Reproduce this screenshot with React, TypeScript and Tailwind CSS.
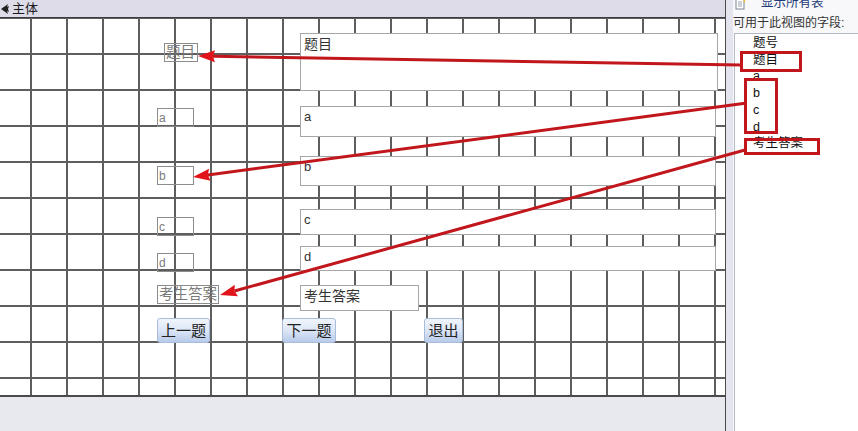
import React from 'react';

const FONT = { fontFamily: '"Liberation Sans", "Noto Sans CJK SC", sans-serif' };

type Pt = [number, number];

const Arrow: React.FC<{ from: Pt; to: Pt }> = ({ from, to }) => {
  const dx = from[0] - to[0];
  const dy = from[1] - to[1];
  const len = Math.hypot(dx, dy);
  const ux = dx / len;
  const uy = dy / len;
  const bx = to[0] + ux * 17;
  const by = to[1] + uy * 17;
  const pts = [
    `${to[0]},${to[1]}`,
    `${bx - uy * 6},${by + ux * 6}`,
    `${bx + ux * -2},${by + uy * -2}`,
    `${bx + uy * 6},${by - ux * 6}`,
  ].join(' ');
  return (
    <g>
      <line x1={from[0]} y1={from[1]} x2={bx - ux * 2} y2={by - uy * 2} stroke="#c2161d" strokeWidth={3} />
      <polygon points={pts} fill="#e0141a" />
    </g>
  );
};

const Label: React.FC<{ className: string; text: string; small?: boolean }> = ({ className, text, small }) => (
  <div
    className={`absolute border border-[#8c8c8c] text-[#7a7a7a] leading-none whitespace-nowrap overflow-hidden flex items-center pl-[1px] ${small ? 'text-[12px]' : 'text-[14.5px]'} ${className}`}
  >
    {text}
  </div>
);

const TextBox: React.FC<{ className: string; text: string }> = ({ className, text }) => (
  <div className={`absolute left-[300px] bg-white border border-[#a6a6a6] text-[14px] text-[#333] leading-none pl-[3px] pt-[3px] ${className}`}>
    {text}
  </div>
);

const Btn: React.FC<{ className: string; text: string }> = ({ className, text }) => (
  <div
    className={`absolute top-[300px] h-[25px] rounded-[3px] border border-[#a9bcdb] bg-gradient-to-b from-[#f1f5fc] via-[#dce6f6] to-[#b8cbea] text-[15px] text-[#222] flex items-center justify-center leading-none ${className}`}
  >
    {text}
  </div>
);

const fields = ['题号', '题目', 'a', 'b', 'c', 'd', '考生答案'];

export default function App() {
  return (
    <div className="relative w-[858px] h-[431px] overflow-hidden flex bg-white" style={FONT}>
      {/* form design area */}
      <div className="w-[726px] flex flex-col border-r border-[#4a4a4a]">
        <div className="h-[18px] shrink-0 bg-[#dddce8] border-b border-[#3c3c3c] flex items-center pl-[1px] gap-[3px] text-[13px] text-[#1a1a1a]">
          <svg width="8" height="10" viewBox="0 0 8 10">
            <polygon points="0,5 7,0 6,3 8,2 7,5 8,8 6,7 7,10" fill="#222" />
          </svg>
          <span className="leading-none">主体</span>
        </div>
        <div className="relative h-[379px] shrink-0 border-b-2 border-[#4a4a4a] bg-white bg-[linear-gradient(to_right,#5e5e5e_2px,transparent_2px),linear-gradient(to_bottom,#5e5e5e_2px,transparent_2px)] [background-size:36px_36px] [background-position:30px_35px]">
          <Label className="left-[164px] top-[25px] w-[34px] h-[19px]" text="题目" />
          <Label className="left-[157px] top-[90px] w-[37px] h-[19px]" text="a" small />
          <Label className="left-[157px] top-[148px] w-[37px] h-[19px]" text="b" small />
          <Label className="left-[157px] top-[199px] w-[37px] h-[19px]" text="c" small />
          <Label className="left-[157px] top-[235px] w-[37px] h-[19px]" text="d" small />
          <Label className="left-[157px] top-[267px] w-[62px] h-[19px]" text="考生答案" />

          <TextBox className="top-[15px] w-[418px] h-[58px]" text="题目" />
          <TextBox className="top-[88px] w-[416px] h-[31px] !text-[13px]" text="a" />
          <TextBox className="top-[138px] w-[416px] h-[30px] !text-[13px]" text="b" />
          <TextBox className="top-[191px] w-[416px] h-[26px] !text-[13px]" text="c" />
          <TextBox className="top-[228px] w-[416px] h-[25px] !text-[13px]" text="d" />
          <TextBox className="top-[267px] w-[119px] h-[26px]" text="考生答案" />

          <Btn className="left-[157px] w-[53px]" text="上一题" />
          <Btn className="left-[282px] w-[54px]" text="下一题" />
          <Btn className="left-[424px] w-[39px]" text="退出" />
        </div>
        <div className="flex-1 bg-[#e7e9ef]" />
      </div>

      {/* splitter */}
      <div className="w-[7px] bg-[#e3e4ed]" />

      {/* field list panel */}
      <div className="flex-1 flex flex-col bg-[#f8f8fa]">
        <div className="h-[18px] -mt-[6px] flex items-center gap-[14px] pl-[2px]">
          <svg width="12" height="13" viewBox="0 0 12 13">
            <rect x="1" y="2" width="8" height="10" fill="#fff" stroke="#7d8594" />
            <line x1="3" y1="5" x2="7" y2="5" stroke="#9aa2b0" />
            <line x1="3" y1="7" x2="7" y2="7" stroke="#9aa2b0" />
            <line x1="3" y1="9" x2="7" y2="9" stroke="#9aa2b0" />
            <polygon points="9,0 10,2 12,2.5 10,3.5 9.5,6 8.5,3.5 6.5,2.5 8.5,2" fill="#f2c21b" />
          </svg>
          <span className="text-[12.5px] text-[#1d3b78] leading-none">显示所有表</span>
        </div>
        <div className="h-[21px] flex items-center text-[12px] text-[#333] leading-none">可用于此视图的字段:</div>
        <div className="flex-1 ml-[1px] bg-white border-l border-t border-[#b4b9c6] pl-[18px] pt-[1px]">
          {fields.map(f => (
            <div key={f} className="h-[16.7px] flex items-center text-[12.5px] text-[#111] leading-none">
              {f}
            </div>
          ))}
        </div>
      </div>

      {/* annotation overlay */}
      <svg className="absolute inset-0 pointer-events-none" width="858" height="431">
        <Arrow from={[741, 65]} to={[198, 56]} />
        <Arrow from={[747, 103]} to={[193, 177]} />
        <Arrow from={[745, 150]} to={[220, 295]} />
        <rect x="741.5" y="52.5" width="59" height="18" fill="none" stroke="#c2161d" strokeWidth={3} />
        <rect x="745.5" y="79.5" width="31" height="53" fill="none" stroke="#c2161d" strokeWidth={3} />
        <rect x="745.5" y="139.5" width="73" height="14" fill="none" stroke="#c2161d" strokeWidth={3} />
      </svg>
    </div>
  );
}
